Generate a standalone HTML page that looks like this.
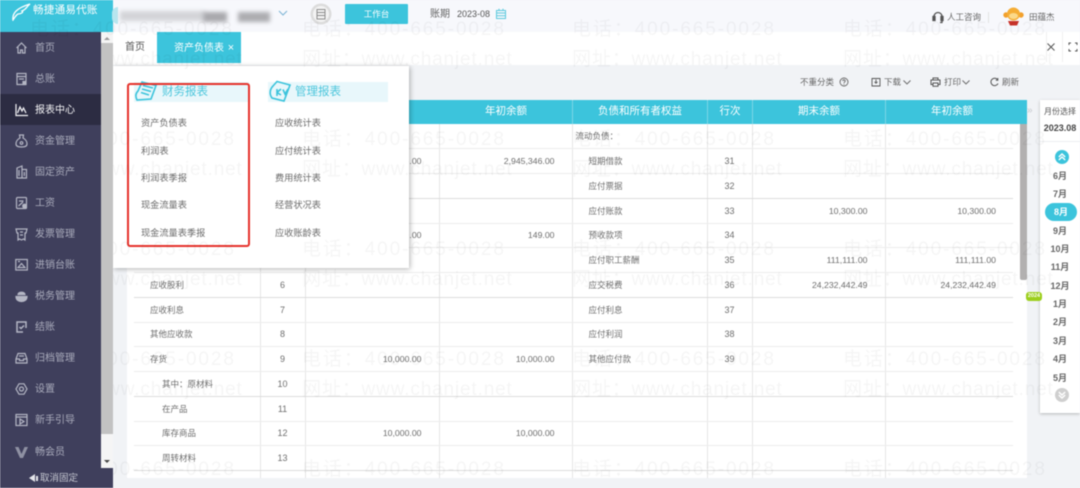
<!DOCTYPE html>
<html lang="zh-CN"><head><meta charset="utf-8"><title>资产负债表</title>
<style>
*{box-sizing:border-box}
html,body{margin:0;padding:0;width:1080px;height:488px;overflow:hidden;background:#f1f3f6}
body{font-family:"Liberation Sans","Noto Sans CJK SC",sans-serif;color:#666}
#w{position:absolute;left:0;top:0;width:1080px;height:488px;overflow:hidden;filter:blur(.4px)}
.a{position:absolute;white-space:nowrap}
.nav{position:absolute;left:0;width:101px;height:31px;color:#a9abbb;font-size:10px;line-height:33px;padding-left:35px}
.nav svg{position:absolute;left:15px;top:8px;width:13px;height:16px;fill:none;stroke:#b4b6c4;stroke-width:1.2}
table{position:absolute;left:134px;top:124px;width:879px;border-collapse:collapse;table-layout:fixed;font-size:8.5px;color:#6e6e6e}
td{height:24.75px;padding:0;border-bottom:1px solid #ececec;border-right:1px solid #e6e6e6;white-space:nowrap;vertical-align:middle}
td:last-child{border-right:0}
td.l{padding-left:16px}td.i{padding-left:28px}
td.c{text-align:center;font-size:9px}td.r{text-align:right;padding-right:17px;font-size:8.7px}
td.x{padding-left:3px}td.y{padding-left:16px}
.h{position:absolute;top:100px;height:24px;line-height:23px;text-align:center;color:#fff;font-size:10.5px;border-right:1px solid #7bd6e6;transform:translateX(1px)}
.m{position:absolute;left:1040px;width:40px;text-align:center;font-size:9px;font-weight:700;color:#666;height:16px;line-height:16px}
.p{position:absolute;font-size:9.2px;color:#6b6b6b;white-space:nowrap;line-height:14px}
.wm{position:absolute;font-size:19px;letter-spacing:1.9px;color:rgba(0,0,0,.04);white-space:nowrap;line-height:22px;font-family:"Liberation Sans","Noto Sans CJK SC",sans-serif}
.wm.n{letter-spacing:.85px}
</style></head><body><div id="w">

<!-- top bar -->
<div class="a" style="left:0;top:0;width:1080px;height:32px;background:#f7f8fc"></div>
<div class="a" style="left:0;top:0;width:113px;height:32px;background:#3cc4dc"></div>
<svg class="a" style="left:11px;top:2px" width="22" height="19" viewBox="0 0 22 19" fill="none" stroke="#fff" stroke-width="1.3"><path d="M2 18C1 11 6 6 19 2C15 5 16 7 11 9C13 10 10 12 7 12C5 13 4 15 2 18Z"/></svg>
<div class="a" style="left:33px;top:3px;font-size:10.5px;line-height:15px;color:#fff;letter-spacing:.3px">畅捷通易代账</div>
<div class="a" style="left:112px;top:7px;width:6px;height:17px;background:#b7e6ef;border-radius:6px 0 0 6px"></div>
<div class="a" style="left:120px;top:11px;width:85px;height:10px;background:#d3d4d8;filter:blur(2px)"></div>
<div class="a" style="left:203px;top:12px;width:24px;height:10px;background:#a8a8ac;filter:blur(2px)"></div>
<div class="a" style="left:238px;top:12px;width:32px;height:10px;background:#acacb0;filter:blur(2px)"></div>
<svg class="a" style="left:277px;top:9px" width="12" height="8" viewBox="0 0 12 8" fill="none" stroke="#7fb5d6" stroke-width="1.1"><path d="M2 2L6 6L10 2"/></svg>
<svg class="a" style="left:310px;top:3px" width="22" height="22" viewBox="0 0 22 22"><circle cx="11" cy="11" r="10.5" fill="#dcdcdc"/><circle cx="11" cy="11" r="8" fill="#f3f3f3"/><path d="M7 6.500H15V16H7ZM7 9.500H15M7 12.500H15" fill="none" stroke="#8d8d8d" stroke-width="1"/></svg>
<div class="a" style="left:345px;top:4px;width:63px;height:20px;background:#3cc4dc;border-radius:1px;color:#fff;font-size:8.500px;line-height:20px;text-align:center">工作台</div>
<div class="a" style="left:430px;top:8px;font-size:10px;line-height:14px;color:#666">账期</div>
<div class="a" style="left:457px;top:7px;font-size:9px;line-height:14px;color:#555">2023-08</div>
<svg class="a" style="left:495px;top:8px" width="12" height="12" viewBox="0 0 12 12" fill="none" stroke="#5cc9de" stroke-width="1"><path d="M1.500 2.500H10.500V10.500H1.500ZM1.500 5H10.500M1.500 7.700H10.500M4 .8V3M8 .8V3"/></svg>
<svg class="a" style="left:932px;top:11px" width="12" height="13" viewBox="0 0 12 13" fill="none" stroke="#555" stroke-width="1.300"><path d="M2 8V5.500A4 4 0 0 1 10 5.500V8M8 11.500H10V8"/><rect x="1" y="5.500" width="2" height="4" fill="#555"/><rect x="9" y="5.500" width="2" height="4" fill="#555"/></svg>
<div class="a" style="left:947px;top:10px;font-size:8.500px;line-height:14px;color:#666">人工咨询</div>
<div class="a" style="left:988px;top:12px;width:1px;height:11px;background:#e3e3e3"></div>
<svg class="a" style="left:1003px;top:7px" width="21" height="19" viewBox="0 0 21 19"><circle cx="3" cy="8" r="2.700" fill="#f2a02c"/><circle cx="18" cy="8" r="2.700" fill="#f2a02c"/><circle cx="10.500" cy="7" r="6.500" fill="#f5ad35"/><ellipse cx="10.500" cy="9" rx="4.500" ry="3" fill="#fbd98a"/><path d="M5 14H16L14 18.500H7Z" fill="#c9332a"/></svg>
<div class="a" style="left:1029px;top:10px;font-size:8.500px;line-height:14px;color:#666">田蕴杰</div>

<!-- main -->
<div class="a" style="left:113px;top:32px;width:967px;height:33px;background:#fff"></div>
<div class="a" style="left:125px;top:40px;font-size:10px;line-height:16px;color:#555">首页</div>
<div class="a" style="left:157px;top:32px;width:84px;height:31px;background:#3cc4dc;color:#fff;font-size:10px;line-height:32px;padding-left:17px">资产负债表 <span style="font-size:11px;margin-left:1px">×</span></div>
<div class="a" style="left:1046px;top:32px;width:1px;height:30px;background:#f0f0f0"></div>
<div class="a" style="left:1062px;top:32px;width:1px;height:30px;background:#f0f0f0"></div>
<svg class="a" style="left:1046px;top:42px" width="10" height="10" viewBox="0 0 10 10" fill="none" stroke="#555" stroke-width="1"><path d="M1.500 1.500L8.500 8.500M8.500 1.500L1.500 8.500"/></svg>
<svg class="a" style="left:1068px;top:42px" width="10" height="10" viewBox="0 0 10 10" fill="none" stroke="#555" stroke-width="1"><path d="M1 3V1H3M7 1H9V3M9 7V9H7M3 9H1V7"/></svg>

<div class="a" style="left:113px;top:65px;width:967px;height:35px;background:#f1f3f6"></div>
<div class="a" style="left:800px;top:75px;font-size:8.500px;line-height:14px;color:#666">不重分类</div>
<svg class="a" style="left:839px;top:77px" width="10" height="10" viewBox="0 0 10 10" fill="none" stroke="#666" stroke-width=".9"><circle cx="5" cy="5" r="4"/><path d="M3.800 4C3.800 2.500 6.200 2.500 6.200 4C6.200 5 5 5 5 6M5 6.800V7.600"/></svg>
<svg class="a" style="left:871px;top:77px" width="10" height="10" viewBox="0 0 10 10" fill="none" stroke="#555" stroke-width=".9"><path d="M1 1.500H9V9H1ZM5 2.500V6M3.500 4.800L5 6.300L6.500 4.800"/></svg>
<div class="a" style="left:884px;top:75px;font-size:8.500px;line-height:14px;color:#666">下载</div>
<svg class="a" style="left:902px;top:79px" width="10" height="7" viewBox="0 0 10 7" fill="none" stroke="#666" stroke-width=".9"><path d="M1.500 1.500L5 5L8.500 1.500"/></svg>
<svg class="a" style="left:930px;top:77px" width="11" height="10" viewBox="0 0 11 10" fill="none" stroke="#555" stroke-width="1"><path d="M3 3V1H8V3M3 7.500H1V3H10V7.500H8M3 6H8V9.300H3Z"/></svg>
<div class="a" style="left:944px;top:75px;font-size:8.500px;line-height:14px;color:#666">打印</div>
<svg class="a" style="left:961px;top:79px" width="10" height="7" viewBox="0 0 10 7" fill="none" stroke="#666" stroke-width=".9"><path d="M1.500 1.500L5 5L8.500 1.500"/></svg>
<svg class="a" style="left:990px;top:77px" width="9" height="10" viewBox="0 0 9 10" fill="none" stroke="#555" stroke-width="1"><path d="M7.800 3A3.700 3.700 0 1 0 8 6.500M7.800 1V3.200H5.800"/></svg>
<div class="a" style="left:1002px;top:75px;font-size:8.500px;line-height:14px;color:#666">刷新</div>

<!-- table -->
<div class="a" style="left:127px;top:124px;width:900px;height:354px;background:#fff;overflow:hidden">
<div style="position:absolute;left:0;top:0;width:900px;height:354px">
<table style="left:7px;top:0"><colgroup><col style="width:126px"><col style="width:45px"><col style="width:134px"><col style="width:133px"><col style="width:135px"><col style="width:45px"><col style="width:133px"><col></colgroup>
<tr><td></td><td></td><td></td><td></td><td class="x">流动负债：</td><td></td><td></td><td></td></tr>
<tr><td></td><td></td><td class="r">2,945,346.00</td><td class="r">2,945,346.00</td><td class="y">短期借款</td><td class="c">31</td><td></td><td></td></tr>
<tr><td></td><td></td><td></td><td></td><td class="y">应付票据</td><td class="c">32</td><td></td><td></td></tr>
<tr><td></td><td></td><td></td><td></td><td class="y">应付账款</td><td class="c">33</td><td class="r">10,300.00</td><td class="r">10,300.00</td></tr>
<tr><td></td><td></td><td class="r">149.00</td><td class="r">149.00</td><td class="y">预收款项</td><td class="c">34</td><td></td><td></td></tr>
<tr><td></td><td></td><td></td><td></td><td class="y">应付职工薪酬</td><td class="c">35</td><td class="r">111,111.00</td><td class="r">111,111.00</td></tr>
<tr><td class="l">应收股利</td><td class="c">6</td><td></td><td></td><td class="y">应交税费</td><td class="c">36</td><td class="r">24,232,442.49</td><td class="r">24,232,442.49</td></tr>
<tr><td class="l">应收利息</td><td class="c">7</td><td></td><td></td><td class="y">应付利息</td><td class="c">37</td><td></td><td></td></tr>
<tr><td class="l">其他应收款</td><td class="c">8</td><td></td><td></td><td class="y">应付利润</td><td class="c">38</td><td></td><td></td></tr>
<tr><td class="l">存货</td><td class="c">9</td><td class="r">10,000.00</td><td class="r">10,000.00</td><td class="y">其他应付款</td><td class="c">39</td><td></td><td></td></tr>
<tr><td class="i">其中：原材料</td><td class="c">10</td><td></td><td></td><td></td><td></td><td></td><td></td></tr>
<tr><td class="i">在产品</td><td class="c">11</td><td></td><td></td><td></td><td></td><td></td><td></td></tr>
<tr><td class="i">库存商品</td><td class="c">12</td><td class="r">10,000.00</td><td class="r">10,000.00</td><td></td><td></td><td></td><td></td></tr>
<tr><td class="i">周转材料</td><td class="c">13</td><td></td><td></td><td></td><td></td><td></td><td></td></tr>
<tr><td></td><td></td><td></td><td></td><td></td><td></td><td></td><td></td></tr>
</table></div>
<div class="a" style="left:7px;top:74px;width:879px;height:1px;background:#dcdcdc"></div>
<div class="a" style="left:7px;top:173px;width:879px;height:1px;background:#dcdcdc"></div>
<div class="a" style="left:7px;top:272px;width:879px;height:1px;background:#dcdcdc"></div>
<div class="a" style="left:7px;top:346px;width:879px;height:1px;background:#dcdcdc"></div>
</div>
<div class="a" style="left:127px;top:100px;width:900px;height:24px;background:#3cc4dc"></div>
<div class="h" style="left:439px;width:133px">年初余额</div>
<div class="h" style="left:572px;width:135px">负债和所有者权益</div>
<div class="h" style="left:707px;width:45px">行次</div>
<div class="h" style="left:752px;width:133px">期末余额</div>
<div class="h" style="left:885px;width:132px;border:0">年初余额</div>
<div class="a" style="left:1020px;top:124px;width:7px;height:156px;background:#b2b0b0;border-radius:0 0 2px 2px"></div>
<div class="a" style="left:1027px;top:100px;font-size:10px;line-height:22px;color:#c7c9cf">»</div>

<!-- month panel -->
<div class="a" style="left:1040px;top:100px;width:40px;height:313px;background:#fff;box-shadow:0 1px 3px rgba(0,0,0,.25)"></div>
<div class="a" style="left:1040px;top:141px;width:40px;height:1px;background:#eceef1"></div>
<div class="a" style="left:1040px;top:105px;width:40px;text-align:center;font-size:8px;line-height:14px;color:#555">月份选择</div>
<div class="a" style="left:1040px;top:121px;width:40px;text-align:center;font-size:9px;line-height:14px;font-weight:700;color:#444">2023.08</div>
<svg class="a" style="left:1055px;top:150px" width="14" height="14" viewBox="0 0 14 14"><circle cx="7" cy="7" r="7" fill="#3cc4dc"/><path d="M3.800 7L7 4L10.200 7M3.800 10L7 7L10.200 10" fill="none" stroke="#fff" stroke-width="1.400"/></svg>
<div class="m" style="top:168px">6月</div><div class="m" style="top:186px">7月</div>
<div class="a" style="left:1045px;top:203px;width:32px;height:18px;background:#3cc4dc;border-radius:9px;color:#fff;font-size:9px;font-weight:700;line-height:18px;text-align:center">8月</div>
<div class="m" style="top:223px">9月</div><div class="m" style="top:241px">10月</div><div class="m" style="top:259px">11月</div><div class="m" style="top:278px">12月</div><div class="m" style="top:296px">1月</div><div class="m" style="top:314px">2月</div><div class="m" style="top:333px">3月</div><div class="m" style="top:351px">4月</div><div class="m" style="top:370px">5月</div>
<svg class="a" style="left:1055px;top:388px" width="14" height="14" viewBox="0 0 14 14"><circle cx="7" cy="7" r="7" fill="#cfcfcf"/><path d="M3.800 4L7 7L10.200 4M3.800 7L7 10L10.200 7" fill="none" stroke="#fff" stroke-width="1.400"/></svg>
<div class="a" style="left:1026px;top:292px;width:16px;height:9px;background:#9ccf1c;border-radius:3px;color:#fff;font-size:5.500px;font-weight:700;line-height:9px;text-align:center">2024</div>

<!-- popover -->
<div class="a" style="left:113px;top:66px;width:296px;height:202px;background:#fff;box-shadow:1px 1px 5px rgba(0,0,0,.3)"></div>
<div class="a" style="left:134px;top:82px;width:115px;height:20px;background:#e8f7fb"></div>
<div class="a" style="left:268px;top:82px;width:120px;height:20px;background:#e8f7fb"></div>
<svg class="a" style="left:134px;top:80px" width="24" height="23" viewBox="0 0 24 23" fill="none" stroke="#3cc4dc" stroke-width="1.600"><path d="M8 2L22 5.500L17 19L3 20C1 16 2 13 4 11ZM9 5.500L19 8M8 9L17 11.500M7 12.500L15 15"/></svg>
<svg class="a" style="left:268px;top:80px" width="24" height="23" viewBox="0 0 24 23" fill="none" stroke="#3cc4dc" stroke-width="1.600"><path d="M9 1.500L22 5L16 21L4 18C1 14 2 9 5 6ZM9 9V16M9 12.500L13 9M9 12.500L13 15M15 9.500L17 14L20 9"/></svg>
<div class="a" style="left:162px;top:84px;font-size:11.500px;line-height:17px;color:#4cc6dc">财务报表</div>
<div class="a" style="left:295px;top:84px;font-size:11.500px;line-height:17px;color:#4cc6dc">管理报表</div>
<div class="p" style="left:141px;top:116px">资产负债表</div><div class="p" style="left:141px;top:144px">利润表</div><div class="p" style="left:141px;top:171px">利润表季报</div><div class="p" style="left:141px;top:198px">现金流量表</div><div class="p" style="left:141px;top:226px">现金流量表季报</div>
<div class="p" style="left:275px;top:116px">应收统计表</div><div class="p" style="left:275px;top:144px">应付统计表</div><div class="p" style="left:275px;top:171px">费用统计表</div><div class="p" style="left:275px;top:198px">经营状况表</div><div class="p" style="left:275px;top:226px">应收账龄表</div>
<div class="a" style="left:127px;top:83px;width:123px;height:164px;border:2px solid #e6322b;border-radius:3px"></div>

<!-- sidebar -->
<div class="a" style="left:0;top:32px;width:101px;height:436px;background:#3f3f5c"></div>
<div class="a" style="left:101px;top:32px;width:12px;height:436px;background:#f5f5f5"></div>
<div class="a" style="left:101px;top:43px;width:12px;height:391px;background:#c2c2c2"></div>
<div class="a" style="left:104px;top:37px;width:0;height:0;border:3px solid transparent;border-bottom-color:#999;border-top:0"></div>
<div class="a" style="left:104px;top:460px;width:0;height:0;border:3px solid transparent;border-top-color:#444;border-bottom:0"></div>
<div class="a" style="left:0;top:468px;width:113px;height:20px;background:#3f3f5c"></div>
<div class="a" style="left:0;top:94px;width:101px;height:31px;background:#2c2c42"></div>

<div class="nav" style="top:32px"><svg viewBox="0 0 13 16"><path d="M1.500 8L6.500 3L11.500 8M3 7V13H5.500V10H7.500V13H10V7"/></svg>首页</div>
<div class="nav" style="top:63px"><svg viewBox="0 0 13 16"><path d="M10.500 13.500H2V2.500H11V10M2 5.500H11M4 8H9"/><rect x="8" y="10.500" width="3" height="3" fill="#b4b6c4"/></svg>总账</div>
<div class="nav" style="top:94px;color:#f4f4f6"><svg viewBox="0 0 13 16" style="stroke:#f4f4f6"><path d="M1 2V13.500H13M2.500 11L5 5L7 9L8.500 6L11 11"/></svg>报表中心</div>
<div class="nav" style="top:125px"><svg viewBox="0 0 13 16"><path d="M4.500 2H8.500L8 5C11 6.500 12 9 12 11C12 13 10.500 14 6.500 14C2.500 14 1 13 1 11C1 9 2 6.500 5 5Z"/><circle cx="6.500" cy="10" r="1.300"/></svg>资金管理</div>
<div class="nav" style="top:156px"><svg viewBox="0 0 13 16"><path d="M2 4L7 2V14H2ZM7 5.500H11.500V14H7M4 6V12M9.300 8V12"/></svg>固定资产</div>
<div class="nav" style="top:187px"><svg viewBox="0 0 13 16"><rect x="1.500" y="2.500" width="10" height="11" rx="1"/><path d="M4 6H8.500M3.500 11L8 7"/><circle cx="9.500" cy="11" r="1.800" fill="#b4b6c4"/></svg>工资</div>
<div class="nav" style="top:218px"><svg viewBox="0 0 13 16"><path d="M1 3H12L11 7H10V14L8.500 13L6.500 14L4.500 13L3 14V7H2ZM5 6H8M5 9H8"/></svg>发票管理</div>
<div class="nav" style="top:249px"><svg viewBox="0 0 13 16"><rect x=".8" y="2.500" width="11.500" height="10.500"/><path d="M3 10.500L6.500 6.500L10 10.500ZM3 4.500H5"/></svg>进销台账</div>
<div class="nav" style="top:280px"><svg viewBox="0 0 13 16"><path d="M1 8.500H12C12 12 9.500 13.500 6.500 13.500C3.500 13.500 1 12 1 8.500Z" fill="#b4b6c4"/><path d="M3 6.500C3 3.500 10 3.500 10 6.500Z" fill="#b4b6c4"/></svg>税务管理</div>
<div class="nav" style="top:311px"><svg viewBox="0 0 13 16" style="stroke-width:1.500"><path d="M11 9V3H2V13H8M4.500 8L6 9.500L9 6.500"/></svg>结账</div>
<div class="nav" style="top:342px"><svg viewBox="0 0 13 16"><path d="M1 9L3 3.500H10L12 9V13H1ZM1 9H4.500V10.500H8.500V9H12M4 6H9"/></svg>归档管理</div>
<div class="nav" style="top:373px"><svg viewBox="0 0 13 16"><path d="M4 2.800H9L12 8L9 13.200H4L1 8Z"/><circle cx="6.500" cy="8" r="2"/></svg>设置</div>
<div class="nav" style="top:404px"><svg viewBox="0 0 13 16"><rect x="1" y="2.500" width="11" height="11"/><path d="M1 5H12M5 7L9 9.500L5 12Z"/></svg>新手引导</div>
<div class="nav" style="top:436px"><svg viewBox="0 0 13 16" style="fill:#8f91a3;stroke:none"><path d="M0 3H3.500L6.500 10L9.500 3H13L8 14H5Z"/></svg>畅会员</div>
<div class="a" style="left:29px;top:471px;font-size:9.500px;line-height:16px;color:#c4c6d0"><span style="display:inline-block;width:0;height:0;border:4px solid transparent;border-right:6px solid #e4e5ea;border-left:0;vertical-align:-1px"></span><span style="display:inline-block;width:2px;height:5px;background:#e4e5ea;margin:0 2px 0 1px"></span>取消固定</div>

<!-- watermark -->
<div class="wm" style="left:30px;top:19px">电话：400-665-0028</div>
<div class="a" style="left:113px;top:0;width:967px;height:488px;overflow:hidden">
<div class="wm" style="left:189px;top:19px">电话：400-665-0028</div><div class="wm" style="left:459px;top:19px">电话：400-665-0028</div><div class="wm" style="left:730px;top:19px">电话：400-665-0028</div>
<div class="wm n" style="left:-81px;top:49px">网址：www.chanjet.net</div><div class="wm n" style="left:189px;top:49px">网址：www.chanjet.net</div><div class="wm n" style="left:459px;top:49px">网址：www.chanjet.net</div><div class="wm n" style="left:730px;top:49px">网址：www.chanjet.net</div>
<div class="wm" style="left:-81px;top:129px">电话：400-665-0028</div><div class="wm" style="left:189px;top:129px">电话：400-665-0028</div><div class="wm" style="left:459px;top:129px">电话：400-665-0028</div><div class="wm" style="left:730px;top:129px">电话：400-665-0028</div>
<div class="wm n" style="left:-81px;top:159px">网址：www.chanjet.net</div><div class="wm n" style="left:189px;top:159px">网址：www.chanjet.net</div><div class="wm n" style="left:459px;top:159px">网址：www.chanjet.net</div><div class="wm n" style="left:730px;top:159px">网址：www.chanjet.net</div>
<div class="wm" style="left:-81px;top:239px">电话：400-665-0028</div><div class="wm" style="left:189px;top:239px">电话：400-665-0028</div><div class="wm" style="left:459px;top:239px">电话：400-665-0028</div><div class="wm" style="left:730px;top:239px">电话：400-665-0028</div>
<div class="wm n" style="left:-81px;top:269px">网址：www.chanjet.net</div><div class="wm n" style="left:189px;top:269px">网址：www.chanjet.net</div><div class="wm n" style="left:459px;top:269px">网址：www.chanjet.net</div><div class="wm n" style="left:730px;top:269px">网址：www.chanjet.net</div>
<div class="wm" style="left:-81px;top:349px">电话：400-665-0028</div><div class="wm" style="left:189px;top:349px">电话：400-665-0028</div><div class="wm" style="left:459px;top:349px">电话：400-665-0028</div><div class="wm" style="left:730px;top:349px">电话：400-665-0028</div>
<div class="wm n" style="left:-81px;top:379px">网址：www.chanjet.net</div><div class="wm n" style="left:189px;top:379px">网址：www.chanjet.net</div><div class="wm n" style="left:459px;top:379px">网址：www.chanjet.net</div><div class="wm n" style="left:730px;top:379px">网址：www.chanjet.net</div>
<div class="wm" style="left:-81px;top:459px">电话：400-665-0028</div><div class="wm" style="left:189px;top:459px">电话：400-665-0028</div><div class="wm" style="left:459px;top:459px">电话：400-665-0028</div><div class="wm" style="left:730px;top:459px">电话：400-665-0028</div>
</div>
</div></body></html>
